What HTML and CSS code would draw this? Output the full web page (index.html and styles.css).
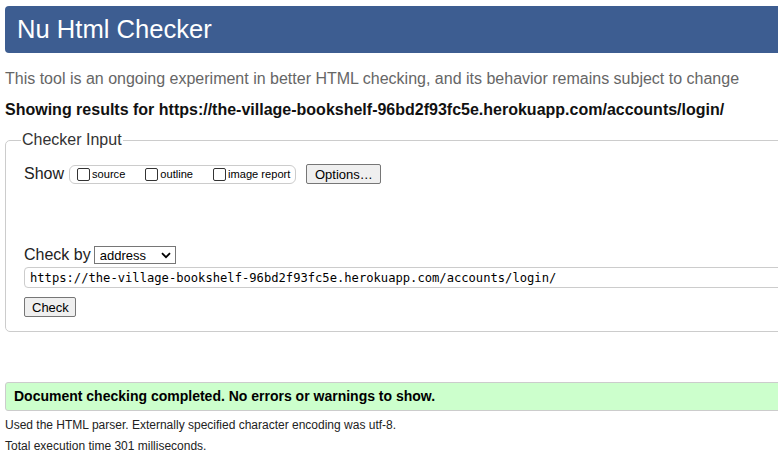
FILE: index.html
```html
<!DOCTYPE html>
<html lang="en">
<head>
<meta charset="utf-8">
<title>Nu Html Checker</title>
<link rel="stylesheet" href="styles.css">
</head>
<body>
<div class="page">
  <h1 class="title">Nu Html Checker</h1>
  <p class="intro">This tool is an ongoing experiment in better HTML checking, and its behavior remains subject to change</p>
  <p class="results">Showing results for https://the-village-bookshelf-96bd2f93fc5e.herokuapp.com/accounts/login/</p>
  <fieldset class="checker">
    <legend class="legend">Checker Input</legend>
    <div class="show-row">
      <span class="show-label">Show</span>
      <div class="opts">
        <label class="opt"><input type="checkbox" class="cb"><span>source</span></label>
        <label class="opt"><input type="checkbox" class="cb"><span>outline</span></label>
        <label class="opt"><input type="checkbox" class="cb"><span>image report</span></label>
      </div>
      <button class="btn btn-options" type="button">Options…</button>
    </div>
    <div class="checkby-row">
      <span class="checkby-label">Check by</span>
      <span class="select-wrap">
        <select class="select"><option>address</option></select>
        <svg class="chev" width="10" height="7" viewBox="0 0 10 7"><path d="M1 1.2 L5 5.2 L9 1.2" fill="none" stroke="#000" stroke-width="1.8"/></svg>
      </span>
    </div>
    <input class="url" type="text" value="https://the-village-bookshelf-96bd2f93fc5e.herokuapp.com/accounts/login/">
    <div class="check-row"><button class="btn btn-check" type="submit">Check</button></div>
  </fieldset>
  <div class="success">Document checking completed. No errors or warnings to show.</div>
  <p class="details">Used the HTML parser. Externally specified character encoding was utf-8.</p>
  <p class="details">Total execution time 301 milliseconds.</p>
</div>
</body>
</html>
```

FILE: styles.css
```css
html {
  overflow: hidden;
}
body {
  margin: 0;
  background: #fff;
  font-family: "Liberation Sans", Arial, sans-serif;
  color: #000;
}
.page {
  width: 840px;
  padding: 6px 0 0 5px;
}
.title {
  margin: 0;
  height: 47px;
  line-height: 46px;
  padding-left: 12px;
  background: #3d5d91;
  color: #fff;
  font-size: 25.6px;
  font-weight: normal;
  border-radius: 4px;
}
.intro {
  margin: 17px 0 0;
  font-size: 16px;
  line-height: 18px;
  color: #666;
}
.results {
  margin: 13px 0 0;
  font-size: 16px;
  line-height: 18px;
  font-weight: bold;
  color: #111;
}
.checker {
  margin: 12px 0 0;
  padding: 15px 18px 14px;
  border: 1px solid #ccc;
  border-radius: 5px;
}
.legend {
  padding: 0 1px;
  margin-left: -3px;
  font-size: 16px;
  line-height: 18px;
  color: #333;
}
.show-row {
  display: flex;
  align-items: center;
  height: 20px;
}
.show-label {
  font-size: 16px;
  color: #222;
}
.opts {
  display: flex;
  align-items: center;
  gap: 20px;
  margin-left: 5px;
  height: 17px;
  padding: 0 5px 0 7px;
  border: 1px solid #ccc;
  border-radius: 6px;
}
.opt {
  display: flex;
  align-items: center;
  gap: 2px;
  font-size: 11.1px;
  color: #000;
}
.cb {
  appearance: none;
  -webkit-appearance: none;
  margin: 0;
  width: 13px;
  height: 13px;
  border: 1px solid #333;
  border-radius: 2px;
  background: #fff;
}
.btn {
  font-family: "Liberation Sans", Arial, sans-serif;
  font-size: 13px;
  height: 20px;
  padding: 0 7px;
  background: #efefef;
  border: 1px solid #767676;
  border-radius: 2px;
  color: #000;
}
.btn-options {
  margin-left: 10px;
  width: 75px;
}
.checkby-row {
  display: flex;
  align-items: center;
  margin-top: 62px;
  height: 18px;
}
.checkby-label {
  font-size: 16px;
  color: #222;
}
.select-wrap {
  position: relative;
  display: inline-block;
  margin-left: 3px;
}
.select {
  appearance: none;
  -webkit-appearance: none;
  display: block;
  width: 82px;
  height: 18px;
  margin: 0;
  padding: 0 0 0 5px;
  border: 1px solid #767676;
  border-radius: 0;
  background: #fff;
  font-family: "Liberation Sans", Arial, sans-serif;
  font-size: 13px;
  color: #000;
}
.chev {
  position: absolute;
  right: 5px;
  top: 6px;
  pointer-events: none;
}
.url {
  display: block;
  box-sizing: border-box;
  width: 100%;
  height: 21px;
  margin: 3px 0 0;
  padding: 0 5px;
  border: 1px solid #ccc;
  border-radius: 4px;
  font-family: "DejaVu Sans Mono", monospace;
  font-size: 12.15px;
  color: #000;
  background: #fff;
}
.check-row {
  margin-top: 9px;
  display: flex;
}
.btn-check {
  width: 52px;
}
.success {
  margin-top: 50px;
  height: 27px;
  line-height: 27px;
  padding-left: 8px;
  background: #ccffcc;
  border: 1px solid #ccc;
  border-radius: 3px;
  font-size: 14px;
  font-weight: bold;
  color: #000;
}
.details {
  margin: 7px 0 0;
  font-size: 12px;
  line-height: 14px;
  color: #222;
}
.details + .details {
  margin-top: 7px;
}
```
